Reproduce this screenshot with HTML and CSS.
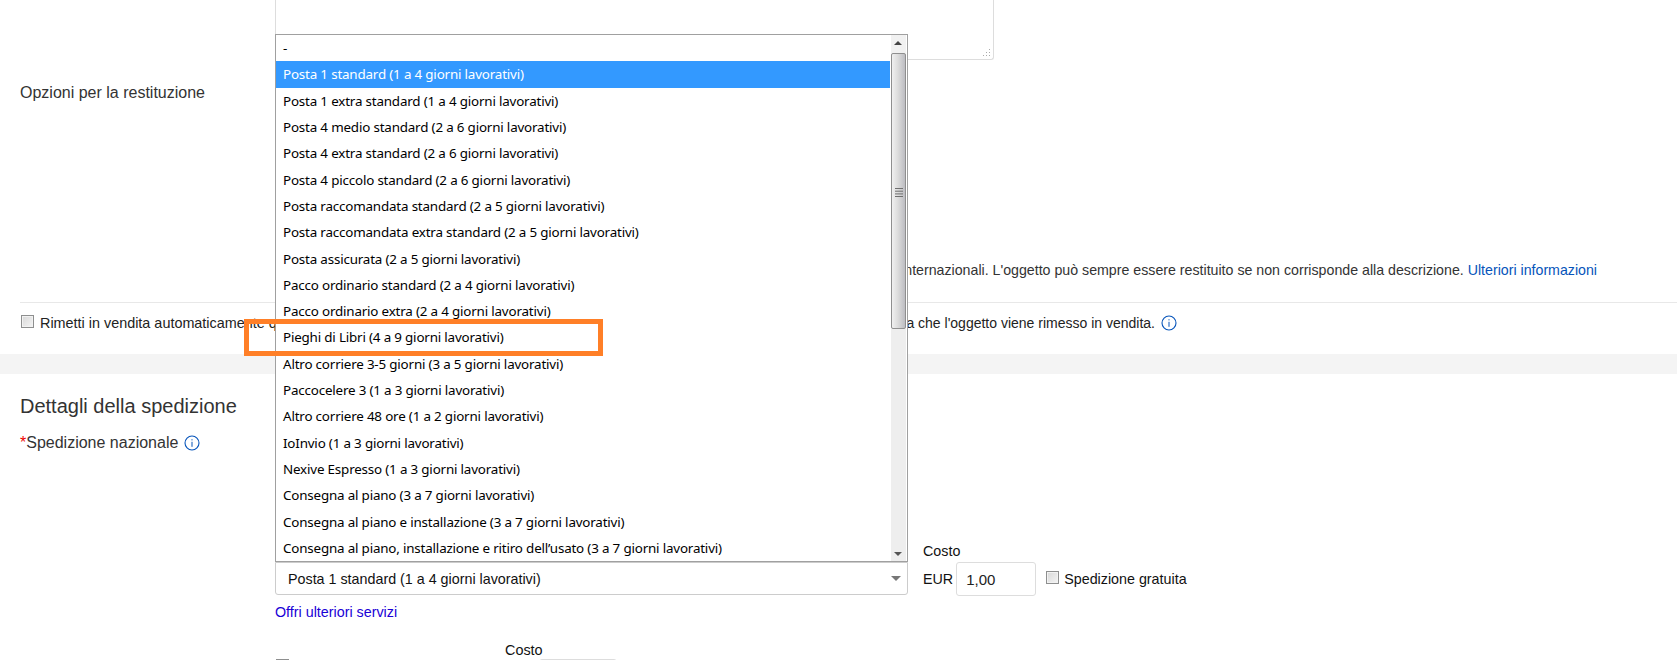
FILE: index.html
```html
<!DOCTYPE html>
<html lang="it">
<head>
<meta charset="utf-8">
<title>Dettagli della spedizione</title>
<link rel="stylesheet" href="styles.css">
</head>
<body>
<main class="page">
  <div class="desc-box">
    <svg class="grip" width="9" height="9" viewBox="0 0 9 9"><g fill="#aaa"><rect x="7" y="1" width="1" height="1"/><rect x="4" y="4" width="1" height="1"/><rect x="7" y="4" width="1" height="1"/><rect x="1" y="7" width="1" height="1"/><rect x="4" y="7" width="1" height="1"/><rect x="7" y="7" width="1" height="1"/></g></svg>
  </div>

  <section class="returns">
    <div class="label">Opzioni per la restituzione</div>
    <p class="note">Le restituzioni sono facoltative per gli acquisti internazionali. L'oggetto può sempre essere restituito se non corrisponde alla descrizione. <a class="more" href="#">Ulteriori informazioni</a></p>
  </section>

  <section class="relist">
    <div class="relist-row">
      <input class="check" type="checkbox">
      <span class="relist-start">Rimetti in vendita automaticamente q</span>
      <span class="relist-end">a che l'oggetto viene rimesso in vendita.</span>
      <svg class="info" width="16" height="16" viewBox="0 0 16 16"><circle cx="8" cy="8" r="7" fill="none" stroke="#0654ba" stroke-width="1.1"/><rect x="7.5" y="6.8" width="1" height="5" fill="#0654ba"/><rect x="7.5" y="4.2" width="1" height="1.2" fill="#0654ba"/></svg>
    </div>
  </section>

  <div class="band"></div>

  <section class="shipping">
    <h2 class="title">Dettagli della spedizione</h2>
    <div class="domestic"><span class="req">*</span><span>Spedizione nazionale</span><svg class="info" width="16" height="16" viewBox="0 0 16 16"><circle cx="8" cy="8" r="7" fill="none" stroke="#0654ba" stroke-width="1.1"/><rect x="7.5" y="6.8" width="1" height="5" fill="#0654ba"/><rect x="7.5" y="4.2" width="1" height="1.2" fill="#0654ba"/></svg></div>

    <div class="service">
      <div class="service-main">
        <div class="select">Posta 1 standard (1 a 4 giorni lavorativi)</div>
        <a class="services-link" href="#">Offri ulteriori servizi</a>
      </div>
      <div class="cost">
        <div class="cost-label">Costo</div>
        <div class="cost-row">
          <span class="currency">EUR</span>
          <input class="price" type="text" value="1,00">
          <input class="check free" type="checkbox">
          <span class="free-label">Spedizione gratuita</span>
        </div>
      </div>
    </div>

    <div class="extra">
      <input class="check" type="checkbox">
      <div class="extra-cost">
        <div class="extra-label">Costo</div>
        <div class="extra-input"></div>
      </div>
    </div>
  </section>

  <div class="popup">
    <ul class="options">
      <li>-</li>
      <li class="selected">Posta 1 standard (1 a 4 giorni lavorativi)</li>
      <li>Posta 1 extra standard (1 a 4 giorni lavorativi)</li>
      <li>Posta 4 medio standard (2 a 6 giorni lavorativi)</li>
      <li>Posta 4 extra standard (2 a 6 giorni lavorativi)</li>
      <li>Posta 4 piccolo standard (2 a 6 giorni lavorativi)</li>
      <li>Posta raccomandata standard (2 a 5 giorni lavorativi)</li>
      <li>Posta raccomandata extra standard (2 a 5 giorni lavorativi)</li>
      <li>Posta assicurata (2 a 5 giorni lavorativi)</li>
      <li>Pacco ordinario standard (2 a 4 giorni lavorativi)</li>
      <li>Pacco ordinario extra (2 a 4 giorni lavorativi)</li>
      <li>Pieghi di Libri (4 a 9 giorni lavorativi)</li>
      <li>Altro corriere 3-5 giorni (3 a 5 giorni lavorativi)</li>
      <li>Paccocelere 3 (1 a 3 giorni lavorativi)</li>
      <li>Altro corriere 48 ore (1 a 2 giorni lavorativi)</li>
      <li>IoInvio (1 a 3 giorni lavorativi)</li>
      <li>Nexive Espresso (1 a 3 giorni lavorativi)</li>
      <li>Consegna al piano (3 a 7 giorni lavorativi)</li>
      <li>Consegna al piano e installazione (3 a 7 giorni lavorativi)</li>
      <li>Consegna al piano, installazione e ritiro dell’usato (3 a 7 giorni lavorativi)</li>
    </ul>
    <div class="scrollbar">
      <div class="arrow up"></div>
      <div class="thumb">
        <svg width="8" height="9" viewBox="0 0 8 9"><g fill="#6f6f6f"><rect y="0" width="8" height="1"/><rect y="2.7" width="8" height="1"/><rect y="5.4" width="8" height="1"/><rect y="8" width="8" height="1"/></g></svg>
      </div>
      <div class="track"></div>
      <div class="arrow down"></div>
    </div>
  </div>

  <div class="highlight"></div>
</main>
</body>
</html>
```
FILE: styles.css
```css
* { box-sizing: border-box; }
html, body { margin: 0; height: 660px; overflow: hidden; background: #fff; }
body { font-family: "Liberation Sans", Arial, sans-serif; font-size: 15px; line-height: 20px; color: #333; }
a { text-decoration: none; }

.page { position: relative; width: 1677px; height: 660px; overflow: hidden; }

.desc-box {
  position: relative;
  width: 719px; height: 60px; margin-left: 275px;
  border: 1px solid #ddd; border-top: 0;
  border-radius: 0 0 3px 3px;
}
.grip { position: absolute; right: 2px; bottom: 2px; }

.returns {
  height: 242px; padding: 23px 0 22px 20px;
  display: flex; flex-direction: column; justify-content: space-between;
}
.label { font-size: 16px; }
.note { margin: 0; padding-left: 255px; width: 1577px; text-align: right; white-space: nowrap; font-size: 14.2px; }
.more { color: #0654ba; }

.relist {
  height: 52px; margin-left: 20px; padding-top: 10px;
  border-top: 1px solid #e8e8e8;
  color: #222;
}
.relist-row { display: flex; align-items: center; width: 1157px; height: 20px; padding-left: 1px; }
.relist .check { margin-top: -3px; }
.relist-start { margin-left: 6px; white-space: nowrap; font-size: 14.4px; }
.relist-end { margin-left: auto; white-space: nowrap; font-size: 14px; }
.relist .info { margin-left: 6px; flex: none; }

.check {
  appearance: none; -webkit-appearance: none;
  width: 13px; height: 13px; margin: 0; flex: none;
  border: 1px solid #8e8f8f;
  background: linear-gradient(135deg, #d8d8d8, #f4f4f4);
  box-shadow: inset 0 0 0 1px #f2f2f2;
}

.band { height: 20px; background: #f4f4f4; }

.shipping { padding: 18px 0 0 20px; }
.title { margin: 0; font-size: 20px; font-weight: 400; line-height: 28px; color: #333; }
.domestic { margin-top: 13px; display: flex; align-items: center; height: 20px; font-size: 16px; }
.domestic .info { margin-left: 6px; }
.req { color: #e00; }

.service { display: flex; align-items: flex-start; margin: 88px 0 0 255px; }
.service-main { width: 633px; margin-top: 21px; }
.select {
  position: relative; height: 33px; padding: 0 12px;
  border: 1px solid #ccc; border-radius: 0 0 3px 3px;
  font-size: 14.3px; line-height: 32px; color: #111;
}
.select::after {
  content: ""; position: absolute; right: 6px; top: 13px;
  border: 5px solid transparent; border-top: 5px solid #777; border-bottom: 0;
}
.services-link { display: block; margin-top: 7px; color: #1a00d6; font-size: 14.3px; }

.cost { margin-left: 15px; color: #111; font-size: 14.3px; }
.cost-row { display: flex; align-items: center; height: 34px; margin-top: 1px; }
.price {
  width: 80px; height: 34px; margin-left: 3px; padding: 2px 9px;
  border: 1px solid #ddd; border-radius: 3px;
  font: 15px "Liberation Sans", Arial, sans-serif; color: #222; outline: 0;
}
.free { margin: -3px 0 0 10px; }
.free-label { margin-left: 5px; }

.extra { display: flex; align-items: flex-start; margin: 18px 0 0 256px; font-size: 14.4px; color: #111; }
.extra .check { margin-top: 19px; }
.extra-cost { margin-left: 216px; }
.extra-input { width: 78px; height: 30px; margin: -1px 0 0 34px; border: 1px solid #ddd; border-radius: 3px; }

.popup {
  position: absolute; left: 275px; top: 34px;
  width: 633px; height: 528px;
  display: flex;
  background: #fff; border: 1px solid #a0a0a0;
}
.options {
  flex: 1; margin: 0; padding: 0; list-style: none;
  display: grid; grid-auto-rows: 1fr;
  font-family: "Noto Sans", "Open Sans", sans-serif; font-size: 13.4px; letter-spacing: -0.18px; line-height: 20px; color: #000;
}
.options li { display: flex; align-items: center; padding: 0 0 0 7px; margin-right: 1px; white-space: nowrap; }
.options .selected { background: #3399ff; color: #fff; }

.scrollbar { width: 15px; flex: none; display: flex; flex-direction: column; background: #eee; margin-right: 1px; }
.arrow { height: 18px; flex: none; position: relative; }
.arrow::after {
  content: ""; position: absolute; left: 3px;
  border: 4px solid transparent;
}
.arrow.up { background: #f1f1f1; }
.arrow.up::after { top: 6px; border-top: 0; border-bottom: 4px solid #444; }
.arrow.down::after { bottom: 5px; border-bottom: 0; border-top: 4px solid #555; }
.thumb {
  height: 276px; flex: none;
  display: flex; align-items: flex-end; justify-content: center;
  border: 1px solid #8f8f8f; border-radius: 2px;
  background: linear-gradient(90deg, #f0f0f0, #dcdcdc 45%, #bdbdc2);
}
.thumb svg { margin-bottom: 131px; }
.track { flex: 1; }

.highlight {
  position: absolute; left: 244px; top: 319px;
  width: 359px; height: 37px;
  border: 5px solid #ff7f27;
}
```
